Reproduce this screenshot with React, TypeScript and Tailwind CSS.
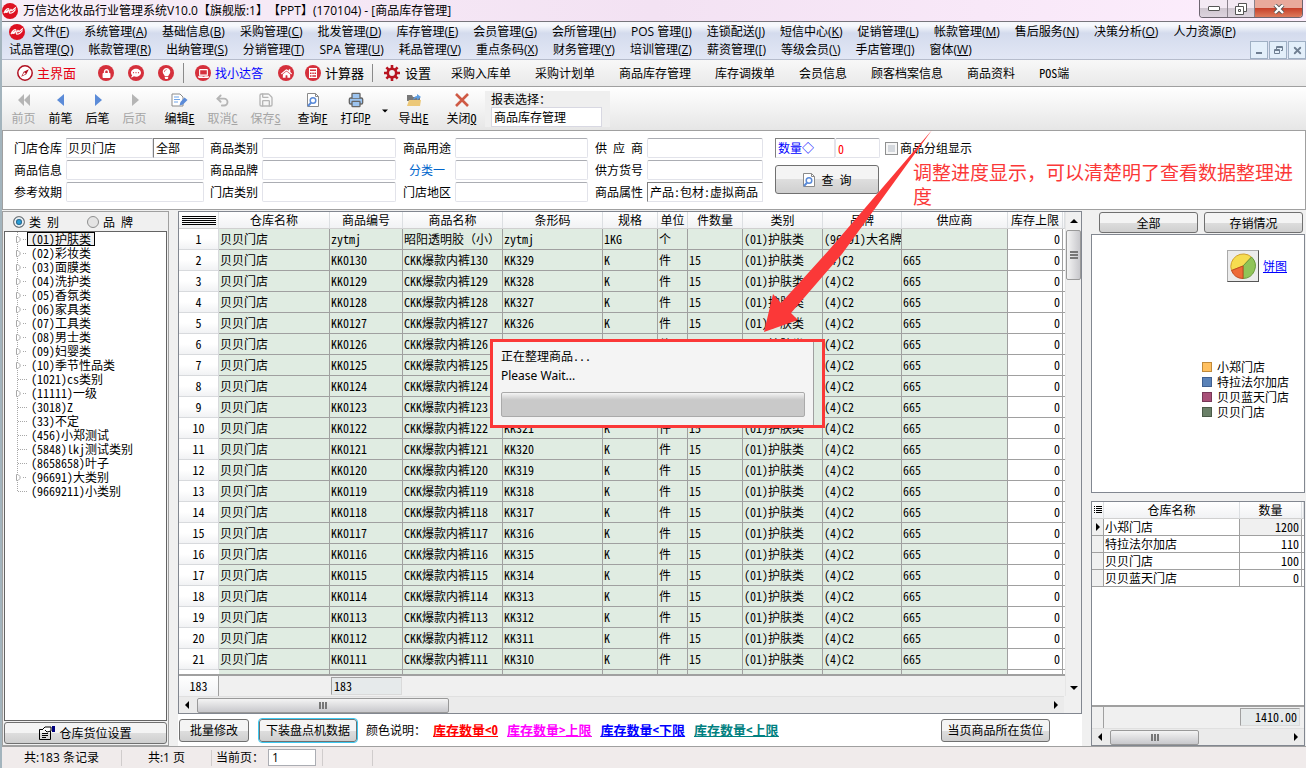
import type { ReactNode } from "react";
import { Printer, Save, Undo2, X } from "lucide-react";
import { FaCommentDots, FaHome, FaLaptop, FaLightbulb, FaLock } from "react-icons/fa";

const menuTop = [
  ["文件", "F"],
  ["系统管理", "A"],
  ["基础信息", "B"],
  ["采购管理", "C"],
  ["批发管理", "D"],
  ["库存管理", "E"],
  ["会员管理", "G"],
  ["会所管理", "H"],
  ["POS 管理", "I"],
  ["连锁配送", "J"],
  ["短信中心", "K"],
  ["促销管理", "L"],
  ["帐款管理", "M"],
  ["售后服务", "N"],
  ["决策分析", "O"],
  ["人力资源", "P"],
];

const menuBottom = [
  ["试品管理", "Q"],
  ["帐款管理", "R"],
  ["出纳管理", "S"],
  ["分销管理", "T"],
  ["SPA 管理", "U"],
  ["耗品管理", "V"],
  ["重点条码", "X"],
  ["财务管理", "Y"],
  ["培训管理", "Z"],
  ["薪资管理", "["],
  ["等级会员", "\\"],
  ["手店管理", "]"],
  ["窗体", "W"],
];

const shortcuts = [
  "采购入库单",
  "采购计划单",
  "商品库存管理",
  "库存调拨单",
  "会员信息",
  "顾客档案信息",
  "商品资料",
  "POS端",
];

const tree = [
  { label: "(01)护肤类", open: true },
  { label: "(02)彩妆类", open: true },
  { label: "(03)面膜类", open: true },
  { label: "(04)洗护类", open: true },
  { label: "(05)香氛类", open: true },
  { label: "(06)家具类", open: true },
  { label: "(07)工具类", open: true },
  { label: "(08)男士类", open: true },
  { label: "(09)妇婴类", open: true },
  { label: "(10)季节性品类", open: true },
  { label: "(1021)cs类别", open: false },
  { label: "(11111)一级", open: true },
  { label: "(3018)Z", open: false },
  { label: "(33)不定", open: false },
  { label: "(456)小郑测试", open: false },
  { label: "(5848)lkj测试类别", open: false },
  { label: "(8658658)叶子", open: false },
  { label: "(96691)大类别", open: true },
  { label: "(9669211)小类别", open: false },
];

const columns = [
  "仓库名称",
  "商品编号",
  "商品名称",
  "条形码",
  "规格",
  "单位",
  "件数量",
  "类别",
  "品牌",
  "供应商",
  "库存上限",
];

const rows = [
  ["贝贝门店", "zytmj", "昭阳透明胶（小）", "zytmj", "1KG", "个", "", "(01)护肤类", "(96691)大名牌", "", "0"],
  ...Array.from({ length: 20 }, (_, i) => [
    "贝贝门店",
    `KK0${130 - i}`,
    `CKK爆款内裤${130 - i}`,
    `KK${329 - i}`,
    "K",
    "件",
    "15",
    "(01)护肤类",
    "(4)C2",
    "665",
    "0",
  ]),
];

const legend = [
  { name: "小郑门店", color: "border-[#c08a3a] bg-[#ffc060]" },
  { name: "特拉法尔加店", color: "border-[#3f5f90] bg-[#5a82b8]" },
  { name: "贝贝蓝天门店", color: "border-[#783858] bg-[#a85078]" },
  { name: "贝贝门店", color: "border-[#4a5a48] bg-[#6a8068]" },
];

const stock = [
  ["小郑门店", "1200"],
  ["特拉法尔加店", "110"],
  ["贝贝门店", "100"],
  ["贝贝蓝天门店", "0"],
];

const field = "h-5 rounded-[2px] border border-[#e2e3ea] border-t-[#abadb3] bg-white px-[2px] outline-none";
const winButton =
  "flex items-center justify-center rounded-[3px] border border-[#707070] bg-linear-to-b from-[#f4f4f4] from-50% via-[#dedede] via-50% to-[#cfcfcf]";
const headCell =
  "h-[17px] border-r border-b border-r-[#dcdfe2] border-b-[#d0d0d0] bg-linear-to-b from-white to-[#f1f2f4] p-0 text-center font-normal";

function Logo() {
  return (
    <svg viewBox="0 0 16 16" className="size-4 shrink-0" aria-hidden="true">
      <circle cx="8" cy="8" r="8" fill="#dd1122" />
      <path
        d="M2.200 9.800C3.500 6.500 6 5 6.800 5.900c.7.900-1.300 3.600-2.800 3.500-1-.1.500-1.900 3-2.100M7.200 9.300 9 6.500l.9 1.200 3.600-3M7.800 10.200c2.200 0 4.300-1.400 5.400-3.400"
        fill="none"
        stroke="#fff"
        strokeWidth="1.200"
        strokeLinecap="round"
      />
    </svg>
  );
}

function Disc({ children }: { children: ReactNode }) {
  return (
    <span className="flex size-4 shrink-0 items-center justify-center rounded-full bg-[#d5303c] text-white">
      {children}
    </span>
  );
}

function Gear() {
  return (
    <svg viewBox="0 0 16 16" className="size-4" fill="none" stroke="#b81420" aria-hidden="true">
      <circle cx="8" cy="8" r="4.200" strokeWidth="2.600" />
      <path
        d="M8 0v3.500M8 12.500V16M0 8h3.500M12.500 8H16M2.400 2.400l2.400 2.400M11.200 11.200l2.400 2.400M13.600 2.400l-2.400 2.400M4.800 11.200l-2.400 2.400"
        strokeWidth="2.600"
      />
    </svg>
  );
}

function SearchDoc() {
  return (
    <svg viewBox="0 0 14 16" className="h-4 w-[14px]" aria-hidden="true">
      <path d="M1.500 1.500h8l3 3v10h-11z" fill="#fff" stroke="#8a8a8a" />
      <path d="M9.500 1.500v3h3" fill="none" stroke="#8a8a8a" />
      <circle cx="7" cy="8.500" r="2.800" fill="#fff" stroke="#5b8bd8" strokeWidth="1.500" />
      <path d="M5 10.800 2 14" stroke="#5b8bd8" strokeWidth="2" />
    </svg>
  );
}

function MenuRow({ items }: { items: string[][] }) {
  return (
    <>
      {items.map(([name, key]) => (
        <button key={name + key} type="button" className="whitespace-nowrap">
          {name}(<u className="underline-offset-1">{key}</u>)
        </button>
      ))}
    </>
  );
}

type ToolProps = { icon: ReactNode; text: string; hotkey?: string; disabled?: boolean; wide?: boolean };

function Tool({ icon, text, hotkey, disabled, wide }: ToolProps) {
  return (
    <button
      type="button"
      disabled={disabled}
      className={`flex flex-col items-center gap-[2px] ${wide ? "w-[43px]" : "w-[37px]"} ${
        disabled ? "text-[#a5a5a5]" : "text-black"
      }`}
    >
      <span className="flex h-4 items-center">{icon}</span>
      <span className="leading-4 whitespace-nowrap">
        {text}
        {hotkey && <u>{hotkey}</u>}
      </span>
    </button>
  );
}

function Arrow({ dir, className }: { dir: "prev" | "next" | "first"; className: string }) {
  const d = { prev: "M9 0v12L2 6z", next: "M3 0v12l7-6z", first: "M6 0v12L0 6zM12 0v12L6 6z" }[dir];
  return (
    <svg viewBox="0 0 12 12" className={className} fill="currentColor" aria-hidden="true">
      <path d={d} />
    </svg>
  );
}

function Triangle({ dir, className }: { dir: "left" | "right" | "up" | "down"; className: string }) {
  const d = { left: "M6 0v8L2 4z", right: "M2 0v8l4-4z", up: "M0 6h8L4 2z", down: "M0 2h8L4 6z" }[dir];
  return (
    <svg viewBox="0 0 8 8" className={className} fill="currentColor" aria-hidden="true">
      <path d={d} />
    </svg>
  );
}

function Field({ id, label, width, blue }: { id: string; label: string; width: string; blue?: boolean }) {
  return (
    <div className="flex items-center gap-1">
      <label htmlFor={id} className={`w-12 whitespace-pre ${blue ? "text-center text-[#0066cc]" : ""}`}>
        {label}
      </label>
      <input id={id} className={`${field} ${width}`} />
    </div>
  );
}

function HorizontalBar({ thumb }: { thumb: string }) {
  return (
    <div className="flex h-[17px] items-center border-t border-[#e0e0e0] bg-[#ebebeb] px-1">
      <Triangle dir="left" className="size-2 shrink-0" />
      <div
        className={`ml-[6px] flex h-[15px] items-center justify-center gap-px rounded-[2px] border border-[#999] bg-linear-to-b from-[#f4f4f4] to-[#c8c8cc] ${thumb}`}
      >
        <span className="h-[7px] w-[2px] bg-[#777]" />
        <span className="h-[7px] w-[2px] bg-[#777]" />
        <span className="h-[7px] w-[2px] bg-[#777]" />
      </div>
      <Triangle dir="right" className="ml-auto size-2 shrink-0" />
    </div>
  );
}

function TitleBar() {
  return (
    <header className="flex h-[22px] items-start justify-between border-b border-[#77757c] bg-linear-to-r from-[#f8eef8] via-[#f3e2f3] to-[#fdeefd] pr-[3px]">
      <div className="flex h-[21px] items-center gap-[5px]">
        <Logo />
        <h1 className="whitespace-nowrap [text-spacing-trim:space-all]">
          万信达化妆品行业管理系统V10.0【旗舰版:1】【PPT】(170104) - [商品库存管理]
        </h1>
      </div>
      <div className="flex h-[18px] overflow-hidden rounded-b-[4px] border border-t-0 border-[#6d6570]">
        <button
          type="button"
          aria-label="最小化"
          className="flex w-7 items-center justify-center border-r border-[#8a828c] bg-linear-to-b from-[#f3e9f3] from-50% via-[#cfc6d0] via-50% to-[#ddd3de]"
        >
          <span className="h-[5px] w-3 rounded-[1px] border border-[#555] bg-white" />
        </button>
        <button
          type="button"
          aria-label="还原"
          className="flex w-[27px] items-center justify-center border-r border-[#8a828c] bg-linear-to-b from-[#f3e9f3] from-50% via-[#cfc6d0] via-50% to-[#ddd3de]"
        >
          <svg viewBox="0 0 12 12" className="size-3" fill="#fff" stroke="#555">
            <path d="M3.500.5h8v8h-8z" />
            <path d="M.5 3.500h8v8h-8zM3.500 6.500h2v2h-2z" />
          </svg>
        </button>
        <button
          type="button"
          aria-label="关闭"
          className="flex w-[47px] items-center justify-center bg-linear-to-b from-[#e9a99b] from-50% via-[#c7402a] via-50% to-[#dd7a5c]"
        >
          <svg viewBox="0 0 12 10" className="h-[10px] w-3">
            <path d="m2 1 8 8m0-8L2 9" stroke="#555" strokeWidth="4" />
            <path d="m2 1 8 8m0-8L2 9" stroke="#fff" strokeWidth="2.400" />
          </svg>
        </button>
      </div>
    </header>
  );
}

function MenuBar() {
  return (
    <nav className="border-b border-[#b6bccc] bg-linear-to-b from-[#f6f8fc] from-10% via-[#d4dbed] via-30% to-[#e2e7f5] leading-[18px]">
      <div className="flex h-[19px] items-center gap-[15px] pl-[7px]">
        <span className="-mr-2 flex">
          <Logo />
        </span>
        <MenuRow items={menuTop} />
      </div>
      <div className="flex h-[18px] items-center gap-[15px] pl-[7px]">
        <MenuRow items={menuBottom} />
        <div className="ml-auto flex gap-px text-[#6f7f92]">
          <button type="button" aria-label="最小化子窗口" className="flex h-[18px] w-[18px] items-end justify-center border border-[#9fb0c4] bg-[#e3effa] pb-1">
            <span className="h-[2px] w-[6px] bg-current" />
          </button>
          <button type="button" aria-label="还原子窗口" className="flex h-[18px] w-[18px] items-center justify-center border border-[#9fb0c4] bg-[#e3effa]">
            <svg viewBox="0 0 9 9" className="size-[9px]" fill="none" stroke="currentColor">
              <path d="M2.500 3V.5h6v4H7M2.500 1.500h6" />
              <path d="M.5 3.500h5v4h-5zM.5 4.500h5" />
            </svg>
          </button>
          <button type="button" aria-label="关闭子窗口" className="flex h-[18px] w-[18px] items-center justify-center border border-[#9fb0c4] bg-[#e3effa]">
            <X size={11} strokeWidth={4} />
          </button>
        </div>
      </div>
    </nav>
  );
}

function QuickBar() {
  return (
    <div className="flex h-[27px] items-center border-b border-[#a0a0a0] bg-linear-to-b from-[#f8f8f8] to-[#e9e9e9] pl-[15px] whitespace-nowrap">
      <button type="button" className="flex w-20 items-center gap-1 text-[13px] text-[#e60012]">
        <svg viewBox="0 0 16 16" className="size-4" aria-hidden="true">
          <circle cx="8" cy="8" r="7.200" fill="#fff" stroke="#b01020" strokeWidth="1.500" />
          <path d="M11.800 4.200 9.300 9.300 4.200 11.800l2.500-5.100z" fill="#b01020" />
          <path d="m7.200 7.200 1.600 1.600-3.500 1.900z" fill="#fff" />
        </svg>
        主界面
      </button>
      <div className="flex w-[87px] gap-[14px] border-r border-[#8a8a8a] py-[2px] pl-px">
        <button type="button" aria-label="锁定"><Disc><FaLock size={9} /></Disc></button>
        <button type="button" aria-label="消息"><Disc><FaCommentDots size={10} /></Disc></button>
        <button type="button" aria-label="提示"><Disc><FaLightbulb size={11} /></Disc></button>
      </div>
      <div className="flex w-[189px] items-center border-r border-[#8a8a8a] py-px pl-[11px]">
        <button type="button" className="mr-[15px] flex items-center gap-1 text-[#0000ff]">
          <Disc><FaLaptop size={11} /></Disc>
          找小达答
        </button>
        <button type="button" aria-label="主页" className="mr-[11px]"><Disc><FaHome size={11} /></Disc></button>
        <button type="button" className="flex items-center gap-1 text-[13px]">
          <Disc>
            <svg viewBox="0 0 8 10" className="h-[10px] w-2" aria-hidden="true">
              <path d="M0 0h8v10H0z" fill="#fff" />
              <path d="M1 1.500h6v1.500H1zM1 4.500h1.500V6H1zM3.300 4.500h1.500V6H3.300zM5.500 4.500H7V6H5.500zM1 7.200h1.500v1.500H1zM3.300 7.200H7v1.500H3.300z" fill="#d5303c" />
            </svg>
          </Disc>
          计算器
        </button>
      </div>
      <button type="button" className="mr-5 ml-[11px] flex items-center gap-[5px] text-[13px]">
        <Gear />
        设置
      </button>
      <div className="flex gap-6">
        {shortcuts.map((name) => (
          <button key={name} type="button">{name}</button>
        ))}
      </div>
    </div>
  );
}

function ToolBar() {
  return (
    <div className="flex h-[43px] items-start bg-linear-to-b from-white to-[#e6e6e6] pt-[5px] pl-[3px]">
      <Tool text="前页" disabled icon={<Arrow dir="first" className="size-3 text-[#b5b5b5]" />} />
      <Tool text="前笔" icon={<Arrow dir="prev" className="size-3 text-[#5b8bd8]" />} />
      <Tool text="后笔" icon={<Arrow dir="next" className="size-3 text-[#5b8bd8]" />} />
      <Tool text="后页" disabled icon={<Arrow dir="next" className="size-3 text-[#b5b5b5]" />} />
      <div className="ml-[5px] flex">
        <Tool
          wide
          text="编辑"
          hotkey="E"
          icon={
            <svg viewBox="0 0 17 14" className="h-[14px] w-[17px]" fill="none">
              <path d="M1 1h8l3 3v9H1z" fill="#fff" stroke="#8a8a8a" />
              <path d="M3 4h5M3 6.500h6M3 9h4" stroke="#6fa4e8" />
              <path d="m8.500 12.500 1-3.500 4-4.500 3 2.500-4.500 4.500z" fill="#5b8bd8" />
            </svg>
          }
        />
        <Tool wide text="取消" hotkey="C" disabled icon={<Undo2 size={15} strokeWidth={3} className="text-[#b5b5b5]" />} />
        <Tool wide text="保存" hotkey="S" disabled icon={<Save size={16} strokeWidth={2} className="text-[#b5b5b5]" />} />
      </div>
      <div className="ml-1 flex">
        <Tool wide text="查询" hotkey="F" icon={<SearchDoc />} />
        <Tool wide text="打印" hotkey="P" icon={<Printer size={16} strokeWidth={2} fill="#9cc4f0" className="text-[#666]" />} />
      </div>
      <button type="button" aria-label="打印选项" className="flex h-[38px] w-[15px] items-center justify-center">
        <Triangle dir="down" className="size-[6px]" />
      </button>
      <Tool
        wide
        text="导出"
        hotkey="E"
        icon={
          <svg viewBox="0 0 16 14" className="h-[14px] w-4">
            <path d="M1 2h5l1 2h7v4H1z" fill="#777" />
            <path d="M3 7h12l-1 6H1z" fill="#ecc878" />
            <path d="M7 7c1-3 2-4 4-4V1l4 3-4 3V5C9 5 8 6 7 7z" fill="#5b9be0" />
          </svg>
        }
      />
      <div className="ml-[5px] flex">
        <Tool
          wide
          text="关闭"
          hotkey="Q"
          icon={
            <svg viewBox="0 0 14 14" className="size-[14px]" stroke="#cf5a45" strokeWidth="2.600" aria-hidden="true">
              <path d="m1 1 12 12M13 1 1 13" />
            </svg>
          }
        />
      </div>
      <div className="-mt-px ml-[2px] flex h-9 w-[125px] flex-col bg-[#efefef] pl-[6px]">
        <label htmlFor="report" className="leading-4">报表选择：</label>
        <select id="report" className="h-5 w-[111px] appearance-none border border-[#d8d8e2] bg-white px-[2px]">
          <option>商品库存管理</option>
        </select>
      </div>
    </div>
  );
}

function Filters() {
  return (
    <form className="flex h-20 items-start border border-[#a0a0a0] bg-white pt-[7px] pl-[11px] whitespace-nowrap">
      <div className="flex w-[196px] flex-col gap-[2px]">
        <div className="flex items-center gap-1">
          <label htmlFor="shop" className="w-12">门店仓库</label>
          <div className="flex w-[138px]">
            <select id="shop" className="h-5 w-[87px] appearance-none border border-[#e2e3ea] border-t-[#abadb3] px-px">
              <option>贝贝门店</option>
            </select>
            <select aria-label="仓库范围" className="h-5 w-[51px] appearance-none border border-[#e2e3ea] border-t-[#808080] border-l-[#808080] px-[2px]">
              <option>全部</option>
            </select>
          </div>
        </div>
        <Field id="goods" label="商品信息" width="w-[138px]" />
        <Field id="expiry" label="参考效期" width="w-[138px]" />
      </div>
      <div className="flex w-[193px] flex-col gap-[2px]">
        <Field id="category" label="商品类别" width="w-[134px]" />
        <Field id="brand" label="商品品牌" width="w-[134px]" />
        <Field id="shop-type" label="门店类别" width="w-[134px]" />
      </div>
      <div className="flex w-[192px] flex-col gap-[2px]">
        <Field id="usage" label="商品用途" width="w-[133px]" />
        <Field id="class-one" label="分类一" width="w-[133px]" blue />
        <Field id="area" label="门店地区" width="w-[133px]" />
      </div>
      <div className="flex w-[180px] flex-col gap-[2px]">
        <Field id="supplier" label="供 应 商" width="w-[116px]" />
        <Field id="supplier-no" label="供方货号" width="w-[116px]" />
        <div className="flex items-center gap-1">
          <label htmlFor="attribute" className="w-12">商品属性</label>
          <select id="attribute" className="h-5 w-[116px] appearance-none border border-[#e2e3ea] border-t-[#808080] border-l-[#808080] px-[2px]">
            <option>产品:包材:虚拟商品</option>
          </select>
        </div>
      </div>
      <div className="flex flex-col gap-[7px]">
        <div className="flex items-center">
          <select aria-label="数量条件" className="h-5 w-[60px] appearance-none border border-[#e2e3ea] border-t-[#808080] border-l-[#808080] px-[2px] text-[#0000ff]">
            <option>数量◇</option>
          </select>
          <input aria-label="数量" defaultValue="0" className={`${field} w-[45px] text-[#ff0000]`} />
          <label className="ml-[5px] flex items-center gap-[2px]">
            <input type="checkbox" className="size-[13px] appearance-none border border-[#8e8f8f] bg-[#d4d8dd] shadow-[inset_0_0_0_2px_#f6f6f6]" />
            商品分组显示
          </label>
        </div>
        <button type="button" className={`${winButton} h-[29px] w-[104px] gap-[5px] whitespace-pre`}>
          <SearchDoc />
          查 询
        </button>
      </div>
    </form>
  );
}

function CategoryPanel() {
  return (
    <aside className="flex w-[167px] shrink-0 flex-col border border-[#a0a0a0] bg-[#f0f0f0] p-px">
      <div className="flex h-[18px] items-center gap-7 pl-[9px] whitespace-pre">
        <label className="flex items-center gap-1">
          <input
            type="radio"
            name="mode"
            defaultChecked
            className="size-3 appearance-none rounded-full border border-[#777] bg-white checked:bg-radial checked:from-[#2a9fd8] checked:from-20% checked:to-[#123a5a] checked:to-50% checked:shadow-[inset_0_0_0_2px_#e8eef2]"
          />
          类 别
        </label>
        <label className="flex items-center gap-1">
          <input type="radio" name="mode" className="size-3 appearance-none rounded-full border border-[#8e8f8f] bg-[#e4e4e4] checked:bg-[#2a9fd8]" />
          品 牌
        </label>
      </div>
      <ul className="flex-1 border border-[#646464] bg-white pl-[10px]">
        {tree.map((node, i) => (
          <li key={node.label} className="flex h-[14px] items-center leading-[14px] whitespace-nowrap">
            <svg viewBox="0 0 12 14" className="h-[14px] w-3 shrink-0" fill="none" stroke="#a8a8a8" aria-hidden="true">
              {node.open ? (
                <>
                  <path d="M2.500 0v3M2.500 12v2" strokeDasharray="1 1" />
                  <path d="M1.500 4.500v6h1.500l2-2v-2l-2-2z" fill="#fff" />
                  <path d="M8 7.500h4" strokeDasharray="1 1" />
                </>
              ) : (
                <path d={i === tree.length - 1 ? "M2.500 0v7.500H12" : "M2.500 0v14M3 7.500h9"} strokeDasharray="1 1" />
              )}
            </svg>
            <span className={i === 0 ? "border border-black bg-[#f0f0f0] px-[3px] leading-3" : "px-1"}>{node.label}</span>
          </li>
        ))}
      </ul>
      <button type="button" className={`${winButton} mt-px h-[22px] gap-1`}>
        <svg viewBox="0 0 16 14" className="h-[14px] w-4" fill="none" stroke="#000" aria-hidden="true">
          <path d="M.5 3.500h11v10H.5zM3 7.500h6M3 9.500h6M3 11.500h4" />
          <path d="m3 4 3-3h6v4L8 6 6 4" fill="#fff" />
          <path d="M13 0h3v6h-3z" fill="#000080" stroke="none" />
        </svg>
        仓库货位设置
      </button>
    </aside>
  );
}

function StockTable() {
  return (
    <table className="w-full table-fixed border-separate border-spacing-0 whitespace-nowrap">
      <colgroup>
        <col className="w-10" />
        <col className="w-[111px]" />
        <col className="w-[73px]" />
        <col className="w-[100px]" />
        <col className="w-[100px]" />
        <col className="w-[55px]" />
        <col className="w-[30px]" />
        <col className="w-[55px]" />
        <col className="w-20" />
        <col className="w-[79px]" />
        <col className="w-[106px]" />
        <col className="w-[55px]" />
        <col />
      </colgroup>
      <thead>
        <tr>
          <th className={headCell} aria-label="行号">
            <span className="mx-auto flex w-[34px] flex-col gap-px">
              <span className="h-px bg-black" />
              <span className="h-px bg-black" />
              <span className="h-px bg-black" />
              <span className="h-px bg-black" />
              <span className="h-px bg-black" />
            </span>
          </th>
          {columns.map((name) => (
            <th key={name} className={headCell}>{name}</th>
          ))}
          <th className={headCell} />
        </tr>
      </thead>
      <tbody>
        {rows.map((row, i) => (
          <tr key={i}>
            <td className="h-[21px] border-r border-b border-[#d8dadd] bg-linear-to-b from-white from-50% to-[#f1f2f4] p-0 text-center">
              {i + 1}
            </td>
            {row.map((cell, j) => (
              <td
                key={j}
                className={`overflow-hidden border-r border-b border-[#a0a0a0] py-0 ${
                  j === 10 ? "bg-white pr-[2px] text-right" : "bg-[#e0ece2] pr-0 pl-px"
                }`}
              >
                {cell}
              </td>
            ))}
            <td className="border-b border-[#a0a0a0] bg-white p-0" />
          </tr>
        ))}
        <tr>
          <td className="h-1 bg-white p-0" />
          {columns.map((name, j) => (
            <td key={name} className={`border-r border-[#a0a0a0] p-0 ${j === 10 ? "bg-white" : "bg-[#e0ece2]"}`} />
          ))}
          <td className="bg-white p-0" />
        </tr>
      </tbody>
      <tfoot>
        <tr>
          <td className="h-[22px] border-t-2 border-r border-t-[#a0a0a0] border-r-[#a0a0a0] bg-linear-to-b from-white to-[#f1f2f4] p-0 text-center">183</td>
          <td className="border-t-2 border-[#a0a0a0] p-0" />
          <td className="border-t-2 border-[#a0a0a0] p-px">
            <span className="block h-[18px] border border-[#dadada] border-t-[#a0a0a0] border-l-[#a0a0a0] bg-[#e6eaeb] pl-[2px] leading-4">183</span>
          </td>
          <td colSpan={10} className="border-t-2 border-[#a0a0a0] p-0" />
        </tr>
      </tfoot>
    </table>
  );
}

function ProgressDialog() {
  return (
    <div role="dialog" aria-label="进度" className="absolute top-32 left-[312px] flex w-[335px] border-3 border-[#fb3838] bg-[#e0ece2] pr-2">
      <div className="flex h-[83px] flex-1 flex-col border-r border-[#a0a0a0] bg-[#f4f4f4] px-2 pt-1">
        <p className="h-5 leading-5">正在整理商品...</p>
        <p className="h-5 font-['Noto_Sans'] leading-5">Please Wait...</p>
        <div
          role="progressbar"
          aria-label="正在整理商品"
          className="mt-[6px] h-[25px] rounded-[2px] border border-[#aaa] bg-linear-to-b from-[#f4f4f4] via-[#c9c9c9] via-30% to-[#c9c9c9]"
        />
      </div>
    </div>
  );
}

function StockPanel() {
  return (
    <main className="relative flex min-w-0 flex-1 flex-col bg-white">
      <div className="flex flex-col border border-[#828790] bg-[#f0f0f0]">
        <div className="flex">
          <div className="min-w-0 flex-1">
            <StockTable />
          </div>
          <div className="flex w-4 flex-col items-center border-l border-[#e6e6e6] bg-[#f0f0f0]">
            <span className="flex h-[18px] items-center"><Triangle dir="up" className="size-2" /></span>
            <div className="flex h-[50px] w-[15px] flex-col items-center justify-center gap-px rounded-[2px] border border-[#999] bg-linear-to-r from-[#f4f4f4] to-[#c8c8cc]">
              <span className="h-[2px] w-2 bg-[#777]" />
              <span className="h-[2px] w-2 bg-[#777]" />
              <span className="h-[2px] w-2 bg-[#777]" />
            </div>
            <span className="mt-auto flex h-4 items-center"><Triangle dir="down" className="size-2" /></span>
          </div>
        </div>
        <div className="mr-[17px]">
          <HorizontalBar thumb="w-[252px]" />
        </div>
      </div>
      <div className="flex flex-1 items-center pl-px">
        <button type="button" className={`${winButton} h-[23px] w-[70px]`}>批量修改</button>
        <button type="button" className={`${winButton} ml-[10px] h-[23px] w-[98px] outline outline-[#3cc8f0]`}>下装盘点机数据</button>
        <span className="mr-[7px] ml-[9px]">颜色说明：</span>
        <div className="flex gap-[9px] text-[13px] font-bold underline">
          <a href="#zero" className="text-[#ff0000]">库存数量&lt;0</a>
          <a href="#above" className="text-[#ff00ff]">库存数量&gt;上限</a>
          <a href="#low" className="text-[#0000ff]">库存数量&lt;下限</a>
          <a href="#below" className="text-[#008080]">库存数量&lt;上限</a>
        </div>
        <button type="button" className={`${winButton} mr-8 ml-auto h-[23px] w-[109px]`}>当页商品所在货位</button>
      </div>
      <ProgressDialog />
    </main>
  );
}

function SidePanel() {
  return (
    <aside className="flex w-[214px] shrink-0 flex-col">
      <div className="flex gap-[6px] py-px pr-[2px] pl-2">
        <button type="button" className={`${winButton} h-[21px] flex-1`}>全部</button>
        <button type="button" className={`${winButton} h-[21px] flex-1`}>存销情况</button>
      </div>
      <section className="flex h-[259px] flex-col items-end border border-[#828790] bg-white pt-[15px] pr-[17px]">
        <div className="flex items-center gap-1">
          <button type="button" aria-label="饼图" className="flex size-8 items-center justify-center border border-[#555] border-t-[#aaa] border-l-[#aaa] bg-[#ececec]">
            <svg viewBox="0 0 28 28" className="size-7" strokeWidth="1">
              <path d="M14 14 2.500 18.500A12.500 12.500 0 0 1 22.500 5z" fill="#f6dc50" stroke="#d0a030" />
              <path d="M14 14 22.500 5A12.500 12.500 0 0 1 14 26.500z" fill="#90c458" stroke="#6a9a3a" />
              <path d="M14 14v12.500A12.500 12.500 0 0 1 2.500 18.500z" fill="#ee6a38" stroke="#c04a20" />
            </svg>
          </button>
          <a href="#pie" className="text-[#0000ff] underline">饼图</a>
        </div>
        <ul className="mt-[77px] w-[85px]">
          {legend.map((item) => (
            <li key={item.name} className="flex h-[15px] items-center gap-[5px] leading-[15px] whitespace-nowrap">
              <span className={`size-[10px] shrink-0 border ${item.color}`} />
              {item.name}
            </li>
          ))}
        </ul>
      </section>
      <section className="mt-2 flex flex-1 flex-col border border-[#828790] bg-white">
        <table className="w-full table-fixed border-separate border-spacing-0">
          <colgroup>
            <col className="w-3" />
            <col />
            <col className="w-[62px]" />
            <col className="w-[2px]" />
          </colgroup>
          <thead>
            <tr>
              <th className={headCell} aria-label="当前行">
                <svg viewBox="0 0 8 9" className="mx-auto h-[9px] w-2" stroke="#000">
                  <path d="M0 .5h1M2 .5h6M0 2.500h1M2 2.500h6M0 4.500h1M2 4.500h6M0 6.500h1M2 6.500h6" />
                </svg>
              </th>
              <th className={headCell}>仓库名称</th>
              <th className={headCell}>数量</th>
              <th className={headCell} />
            </tr>
          </thead>
          <tbody>
            {stock.map(([name, count], i) => (
              <tr key={name}>
                <td className="h-[17px] border-r border-b border-[#a0a0a0] bg-[#f0f0f0] p-0">
                  {i === 0 && <Triangle dir="right" className="mx-auto size-2" />}
                </td>
                <td className="border-r border-b border-[#a0a0a0] py-0 pr-0 pl-px leading-4">{name}</td>
                <td className={`border-r border-b border-[#a0a0a0] py-0 pr-[2px] pl-0 text-right leading-4 ${i === 0 ? "bg-[#f0f0f0]" : ""}`}>{count}</td>
                <td className="border-b border-[#a0a0a0] p-0" />
              </tr>
            ))}
          </tbody>
        </table>
        <div className="mt-auto flex h-[23px] justify-between border-t-2 border-[#a0a0a0] bg-[#f0f0f0] pr-1">
          <span className="w-3 border-r border-[#a0a0a0]" />
          <output className="mt-px h-[18px] w-[60px] border border-[#dadada] border-t-[#a0a0a0] border-l-[#a0a0a0] bg-[#e6eaeb] pr-[2px] text-right leading-4">
            1410.00
          </output>
        </div>
        <HorizontalBar thumb="w-[89px]" />
      </section>
    </aside>
  );
}

export default function App() {
  return (
    <div className="relative flex min-h-screen flex-col overflow-x-hidden border-l-2 border-[#a3b4bd] bg-[#f0f0f0] font-['Noto_Sans_Mono_CJK_SC','Noto_Sans_CJK_SC',sans-serif] text-[12px] leading-4 text-black">
      <div className="font-['Open_Sans','Noto_Sans_CJK_SC',sans-serif]">
        <TitleBar />
        <MenuBar />
      </div>
      <QuickBar />
      <ToolBar />
      <Filters />
      <div className="flex flex-1 gap-[9px] pt-px pr-[1px]">
        <CategoryPanel />
        <StockPanel />
        <SidePanel />
      </div>
      <footer className="flex h-[22px] items-center border-t border-[#a0a0a0] bg-[#f0ebeb] font-['Open_Sans','Noto_Sans_CJK_SC',sans-serif] whitespace-nowrap">
        <span className="w-[120px] border-r border-[#d0cccc] text-center">共:183 条记录</span>
        <span className="w-[90px] border-r border-[#d0cccc] text-center">共:1 页</span>
        <label className="flex items-center gap-1 border-r border-[#d0cccc] pr-[6px] pl-1">
          当前页：
          <input defaultValue="1" className="h-[17px] w-12 border border-[#abadb3] bg-white px-[3px]" />
        </label>
        <span className="h-4 w-[50px] border-r border-[#d0cccc]" />
      </footer>
      <svg viewBox="0 0 170 204" className="pointer-events-none absolute top-[130px] left-[760px] h-[204px] w-[170px]" aria-hidden="true">
        <path d="M170 0 80 124 29 183 36 190 2 202 11 164 19 173 67 120z" fill="#fb3838" />
      </svg>
      <p className="absolute top-[160px] left-[911px] w-[384px] text-[19px] leading-6 font-light text-[#fb3838]">
        调整进度显示，可以清楚明了查看数据整理进度
      </p>
    </div>
  );
}
